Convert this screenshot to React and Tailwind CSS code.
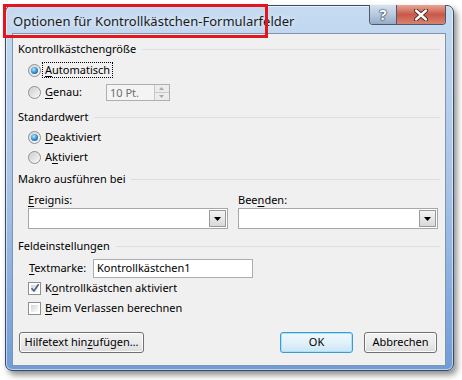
import React from 'react';

const font = "font-['Segoe_UI','Noto_Sans','DejaVu_Sans',sans-serif]";

const U = ({ children }) => (
    <span className="underline decoration-1 underline-offset-[2px]">{children}</span>
);

const Radio = ({ checked }) => (
    <span className="w-[13px] h-[13px] rounded-full border border-[#8e8f8f] bg-gradient-to-br from-[#d4d4d4] to-[#fafafa] flex items-center justify-center shrink-0">
        {checked ? (
            <span className="w-[7px] h-[7px] rounded-full bg-[radial-gradient(circle_at_40%_35%,#b8ecff,#2a86d0_55%,#0b4f8f)]" />
        ) : (
            <span className="w-[9px] h-[9px] rounded-full bg-gradient-to-br from-[#d0d0d0] to-[#f6f6f6]" />
        )}
    </span>
);

const Check = ({ checked }) => (
    <span className="w-[13px] h-[13px] border border-[#8e8f8f] bg-white p-[2px] shrink-0 flex">
        <span className="flex-1 bg-gradient-to-br from-[#d6d6d6] to-[#fbfbfb] relative">
            {checked && (
                <svg className="absolute -left-[1px] -top-[2px]" width="10" height="10" viewBox="0 0 10 10">
                    <path d="M1.5 5.2 L4 8 L8.6 1.2" fill="none" stroke="#4a5f86" strokeWidth="1.6" />
                </svg>
            )}
        </span>
    </span>
);

const Section = ({ title, className = '' }) => (
    <div className={`h-[20px] flex items-center ${className}`}>
        <span>{title}</span>
        <span className="flex-1 ml-[6px] h-px bg-[#d5dfe5]" />
    </div>
);

const Combo = () => (
    <div className="w-[200px] h-[21px] border border-[#a7a7a7] bg-white flex justify-end p-px">
        <div className="w-[17px] h-full border border-[#9a9a9a] bg-gradient-to-b from-[#f4f4f4] to-[#d9d9d9] flex items-center justify-center">
            <svg width="7" height="4" viewBox="0 0 7 4"><path d="M0 0 H7 L3.5 4 Z" fill="#000" /></svg>
        </div>
    </div>
);

const Button = ({ children, className = '', def }) => (
    <div
        className={`h-[21px] rounded-[3px] border flex items-center justify-center ${def
            ? 'border-[#3c9ad0] bg-gradient-to-b from-[#f0f8fc] via-[#e2f1fa] to-[#cbe6f5] shadow-[inset_0_0_0_1px_#a9e2f9]'
            : 'border-[#707070] bg-gradient-to-b from-[#f2f2f2] via-[#ebebeb] to-[#dcdcdc] shadow-[inset_0_0_0_1px_#fcfcfc]'
            } ${className}`}
    >
        {children}
    </div>
);

export default function App() {
    return (
        <div className={`w-[462px] h-[380px] bg-white relative text-[11px] text-black ${font}`}>
            <div className="pt-[5px] pl-[5px]">
                {/* Window frame */}
                <div className="w-[449px] h-[366px] rounded-[7px] border border-[#3a4a62] bg-gradient-to-b from-[#c6dbf1] via-[#a7c4e7] to-[#6f9cd8] shadow-[3px_4px_6px_rgba(0,0,0,0.45),inset_0_0_0_1px_rgba(255,255,255,0.55)] flex flex-col">
                    {/* Title bar */}
                    <div className="h-[27px] flex items-start shrink-0">
                        <span className="mt-[6px] ml-[7px] text-[13px] text-[#1b1b1b] [text-shadow:0_0_6px_#ffffff]">
                            Optionen für Kontrollkästchen-Formularfelder
                        </span>
                        <div className="ml-auto mr-[7px] -mt-px flex h-[20px] border border-[#4b5a70] border-t-0 rounded-b-[4px] overflow-hidden">
                            <div className="w-[27px] bg-gradient-to-b from-[#d6e2ef] via-[#b7c9de] to-[#95abc6] border-r border-[#4b5a70] flex items-center justify-center">
                                <span className="text-[15px] font-bold text-white leading-none [text-shadow:0_0_1px_#2a3a50,0_0_1px_#2a3a50,0_0_2px_#2a3a50]">?</span>
                            </div>
                            <div className="w-[48px] bg-gradient-to-b from-[#e8a593] via-[#c9584a] to-[#d9836c] flex items-center justify-center">
                                <svg width="14" height="12" viewBox="0 0 14 12">
                                    <path d="M2 1.5 L12 10.5 M12 1.5 L2 10.5" stroke="#3b2020" strokeWidth="4.2" strokeLinecap="round" />
                                    <path d="M2 1.5 L12 10.5 M12 1.5 L2 10.5" stroke="#ffffff" strokeWidth="2.4" strokeLinecap="round" />
                                </svg>
                            </div>
                        </div>
                    </div>

                    {/* Client area */}
                    <div className="ml-[6px] mr-[7px] h-[333px] border border-[#8294ad] bg-[#f0f0f0] pl-[5px] pr-[5px] pt-[5px] flex flex-col">
                        <Section title="Kontrollkästchengröße" />

                        <div className="mt-[1px] h-[20px] flex items-center pl-[10px]">
                            <Radio checked />
                            <span className="ml-[2px] px-[2px] leading-[14px] outline outline-1 outline-dotted outline-black">
                                <U>A</U>utomatisch
                            </span>
                        </div>

                        <div className="mt-[2px] h-[20px] flex items-center pl-[10px]">
                            <Radio />
                            <span className="ml-[4px]"><U>G</U>enau:</span>
                            <div className="ml-[24px] w-[64px] h-[17px] border border-[#afafaf] bg-[#f4f4f4] flex">
                                <span className="flex-1 pl-[3px] text-[#6d6d6d] leading-[15px]">10 Pt.</span>
                                <div className="w-[15px] flex flex-col border-l border-[#c8c8c8]">
                                    <div className="flex-1 bg-[#ececec] border-b border-[#c8c8c8] flex items-center justify-center">
                                        <svg width="5" height="3" viewBox="0 0 5 3"><path d="M0 3 H5 L2.5 0 Z" fill="#a8a8a8" /></svg>
                                    </div>
                                    <div className="flex-1 bg-[#ececec] flex items-center justify-center">
                                        <svg width="5" height="3" viewBox="0 0 5 3"><path d="M0 0 H5 L2.5 3 Z" fill="#a8a8a8" /></svg>
                                    </div>
                                </div>
                            </div>
                        </div>

                        <Section title="Standardwert" className="mt-[5px]" />

                        <div className="h-[20px] flex items-center pl-[10px]">
                            <Radio checked />
                            <span className="ml-[4px]"><U>D</U>eaktiviert</span>
                        </div>
                        <div className="h-[20px] flex items-center pl-[10px]">
                            <Radio />
                            <span className="ml-[4px]">A<U>k</U>tiviert</span>
                        </div>

                        <Section title="Makro ausführen bei" className="mt-[2px]" />

                        <div className="mt-[3px] h-[16px] flex items-center pl-[10px]">
                            <span className="w-[210px]"><U>E</U>reignis:</span>
                            <span>Bee<U>n</U>den:</span>
                        </div>
                        <div className="flex pl-[10px] gap-[10px]">
                            <Combo />
                            <Combo />
                        </div>

                        <Section title="Feldeinstellungen" className="mt-[7px]" />

                        <div className="mt-[3px] h-[19px] flex items-center pl-[11px]">
                            <span className="w-[64px]"><U>T</U>extmarke:</span>
                            <div className="w-[160px] h-[19px] border border-[#abadb3] bg-white pl-[3px] flex items-center">
                                Kontrollkästchen1
                            </div>
                        </div>

                        <div className="h-[20px] flex items-center pl-[10px]">
                            <Check checked />
                            <span className="ml-[4px]">K<U>o</U>ntrollkästchen aktiviert</span>
                        </div>
                        <div className="h-[20px] flex items-center pl-[10px]">
                            <Check />
                            <span className="ml-[4px]"><U>B</U>eim Verlassen berechnen</span>
                        </div>

                        <div className="mt-[14px] flex items-center pl-px pr-[3px]">
                            <Button className="w-[125px]">Hilfetext hin<U>z</U>ufügen…</Button>
                            <Button def className="w-[73px] ml-auto">OK</Button>
                            <Button className="w-[73px] ml-[11px]">Abbrechen</Button>
                        </div>
                    </div>
                </div>
            </div>

            {/* Red highlight around the title */}
            <div className="absolute left-[3px] top-[4px] w-[265px] h-[34px] border-[3px] border-[#e2161c]" />
        </div>
    );
}
